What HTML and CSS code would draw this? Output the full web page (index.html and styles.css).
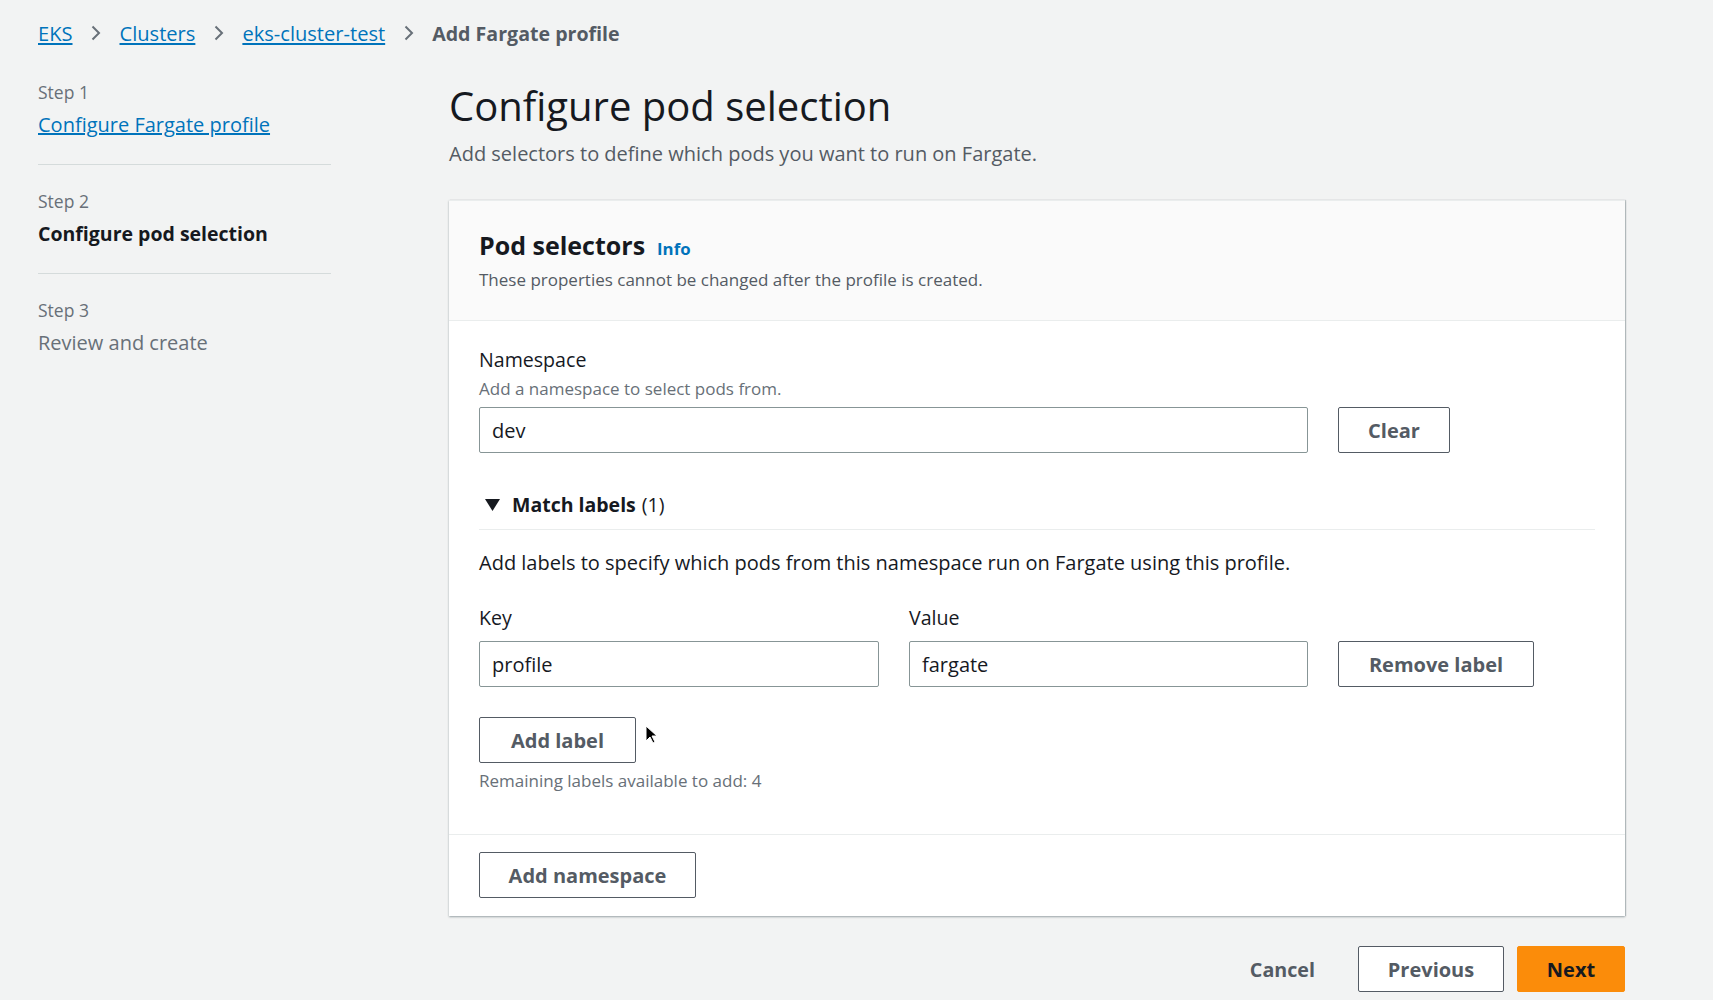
FILE: index.html
```html
<!DOCTYPE html>
<html lang="en">
<head>
<meta charset="utf-8">
<title>Add Fargate profile</title>
<link rel="stylesheet" href="styles.css">
</head>
<body>
<nav class="breadcrumbs">
  <a href="#" class="crumb-link">EKS</a>
  <svg class="chev" viewBox="0 0 10 16" width="10" height="16"><path d="M1.5 1.5l6.5 6.5-6.5 6.5" fill="none" stroke="#687078" stroke-width="2"/></svg>
  <a href="#" class="crumb-link">Clusters</a>
  <svg class="chev" viewBox="0 0 10 16" width="10" height="16"><path d="M1.5 1.5l6.5 6.5-6.5 6.5" fill="none" stroke="#687078" stroke-width="2"/></svg>
  <a href="#" class="crumb-link">eks-cluster-test</a>
  <svg class="chev" viewBox="0 0 10 16" width="10" height="16"><path d="M1.5 1.5l6.5 6.5-6.5 6.5" fill="none" stroke="#687078" stroke-width="2"/></svg>
  <span class="crumb-current">Add Fargate profile</span>
</nav>

<div class="layout">
  <aside class="steps">
    <div class="step">
      <div class="step-num">Step 1</div>
      <a href="#" class="step-link">Configure Fargate profile</a>
    </div>
    <div class="step">
      <div class="step-num">Step 2</div>
      <div class="step-active">Configure pod selection</div>
    </div>
    <div class="step last">
      <div class="step-num">Step 3</div>
      <div class="step-disabled">Review and create</div>
    </div>
  </aside>

  <main class="main">
    <h1 class="title">Configure pod selection</h1>
    <p class="subtitle">Add selectors to define which pods you want to run on Fargate.</p>

    <section class="card">
      <header class="card-header">
        <div class="card-title-row">
          <h2 class="card-title">Pod selectors</h2>
          <a href="#" class="info">Info</a>
        </div>
        <p class="card-desc">These properties cannot be changed after the profile is created.</p>
      </header>

      <div class="card-body">
        <div class="field-label">Namespace</div>
        <div class="field-desc">Add a namespace to select pods from.</div>
        <div class="ns-row">
          <div class="input ns-input">dev</div>
          <button class="btn btn-clear">Clear</button>
        </div>

        <div class="expander">
          <svg class="caret" viewBox="0 0 15 12" width="15" height="12"><path d="M0 0h15L7.5 12z" fill="#16191f"/></svg>
          <span class="exp-title">Match labels</span>
          <span class="exp-count">(1)</span>
        </div>

        <p class="labels-desc">Add labels to specify which pods from this namespace run on Fargate using this profile.</p>

        <div class="kv-row">
          <div class="kv-col key-col">
            <div class="field-label">Key</div>
            <div class="input">profile</div>
          </div>
          <div class="kv-col val-col">
            <div class="field-label">Value</div>
            <div class="input">fargate</div>
          </div>
          <button class="btn btn-remove">Remove label</button>
        </div>

        <div class="add-label-wrap">
          <button class="btn btn-add-label">Add label</button>
          <svg class="cursor" viewBox="0 0 12 19" width="12" height="19"><path d="M1 1v15l4-4 3 6 2-1-3-6h5z" fill="#000" stroke="#fff" stroke-width="1"/></svg>
        </div>
        <div class="remaining">Remaining labels available to add: 4</div>
      </div>

      <div class="card-footer">
        <button class="btn btn-add-ns">Add namespace</button>
      </div>
    </section>

    <div class="actions">
      <button class="btn-link">Cancel</button>
      <button class="btn btn-prev">Previous</button>
      <button class="btn btn-next">Next</button>
    </div>
  </main>
</div>
</body>
</html>
```

FILE: styles.css
```css
* { box-sizing: border-box; }

html, body {
  margin: 0;
  padding: 0;
  background: #f2f3f3;
}

body {
  font-family: "Open Sans", "Liberation Sans", sans-serif;
  color: #16191f;
  font-size: 20px;
  padding: 0 0 0 38px;
}

a { color: #0073bb; }

.breadcrumbs {
  display: flex;
  align-items: center;
  height: 66px;
  gap: 18.5px;
  font-size: 20.1px;
}

.crumb-link { color: #0073bb; text-decoration: underline; }
.chev { display: block; }
.crumb-current { color: #545b64; font-weight: 700; font-size: 19.6px; }

.layout {
  display: grid;
  grid-template-columns: 293px 1176px;
  column-gap: 118px;
}

.steps { padding-top: 15px; }

.step {
  border-bottom: 1px solid #d5dbdb;
  padding: 0 0 25px 0;
  margin-bottom: 25px;
}
.step.last { border-bottom: none; }

.step-num {
  font-size: 17.5px;
  color: #687078;
  line-height: 22px;
  margin-bottom: 8px;
}

.step-link {
  font-size: 20px;
  color: #0073bb;
  text-decoration: underline;
  line-height: 28px;
  display: block;
}

.step-active {
  font-size: 19.5px;
  font-weight: 700;
  line-height: 28px;
}

.step-disabled {
  font-size: 20px;
  color: #687078;
  line-height: 28px;
}

.main { padding-top: 16px; }

.title {
  font-size: 40px;
  font-weight: 400;
  margin: 0;
  line-height: 48px;
}

.subtitle {
  margin: 10px 0 0 0;
  font-size: 20px;
  color: #545b64;
  line-height: 28px;
}

.card {
  margin-top: 32px;
  background: #fff;
  border-top: 1px solid #eaeded;
  box-shadow: 0 1px 2px rgba(0, 28, 36, 0.35), 1px 0 1px rgba(0, 28, 36, 0.18);
}

.card-header {
  background: #fafafa;
  border-bottom: 1px solid #eaeded;
  padding: 28px 30px 28px 30px;
}

.card-title-row {
  display: flex;
  align-items: baseline;
  gap: 12px;
}

.card-title {
  margin: 0;
  font-size: 25px;
  font-weight: 700;
  line-height: 32px;
}

.info {
  font-size: 16.8px;
  font-weight: 700;
  color: #0073bb;
  text-decoration: none;
}

.card-desc {
  margin: 7px 0 0 0;
  font-size: 17px;
  color: #545b64;
  line-height: 24px;
}

.card-body {
  padding: 25px 30px 41px 30px;
}

.field-label {
  font-size: 19.6px;
  line-height: 28px;
}

.field-desc {
  font-size: 17px;
  color: #687078;
  line-height: 24px;
  margin-top: 3px;
}

.input {
  height: 46px;
  border: 1px solid #879596;
  border-radius: 2px;
  padding: 0 12px;
  display: flex;
  align-items: center;
  font-size: 20px;
  background: #fff;
}

.ns-row {
  display: flex;
  gap: 30px;
  margin-top: 6px;
}
.ns-input { width: 829px; }

.btn {
  font-family: inherit;
  font-size: 20px;
  font-weight: 700;
  color: #545b64;
  background: #fff;
  border: 1px solid #545b64;
  border-radius: 2px;
  height: 46px;
  padding: 0;
  cursor: pointer;
}

.btn-clear { width: 112px; }

.expander {
  display: flex;
  align-items: center;
  margin-top: 38px;
  padding: 0 0 10px 6px;
  border-bottom: 1px solid #eaeded;
  line-height: 28px;
}

.caret { margin-right: 12px; display: block; }
.exp-title { font-weight: 700; font-size: 19.5px; }
.exp-count { margin-left: 6px; color: #16191f; font-size: 19.5px; }

.labels-desc {
  margin: 19px 0 0 0;
  font-size: 20px;
  line-height: 28px;
  color: #16191f;
}

.kv-row {
  display: flex;
  align-items: flex-end;
  gap: 30px;
  margin-top: 27px;
}

.kv-col .field-label { margin-bottom: 9px; }
.key-col { width: 400px; }
.val-col { width: 399px; }
.btn-remove { width: 196px; }

.add-label-wrap {
  position: relative;
  margin-top: 30px;
  height: 46px;
}
.btn-add-label { width: 157px; }

.cursor {
  position: absolute;
  left: 166px;
  top: 8px;
}

.remaining {
  margin-top: 6px;
  font-size: 17px;
  color: #687078;
  line-height: 24px;
}

.card-footer {
  border-top: 1px solid #eaeded;
  padding: 17px 30px 18px 30px;
}
.btn-add-ns { width: 217px; }

.actions {
  display: flex;
  justify-content: flex-end;
  align-items: center;
  gap: 13px;
  margin-top: 30px;
}

.btn-link {
  font-family: inherit;
  font-size: 19.7px;
  font-weight: 700;
  color: #545b64;
  background: transparent;
  border: none;
  padding: 0 30px;
  height: 46px;
}

.btn-prev { width: 146px; }

.btn-next {
  width: 108px;
  background: #fb8c0a;
  border-color: #fb8c0a;
  color: #16191f;
}
```
